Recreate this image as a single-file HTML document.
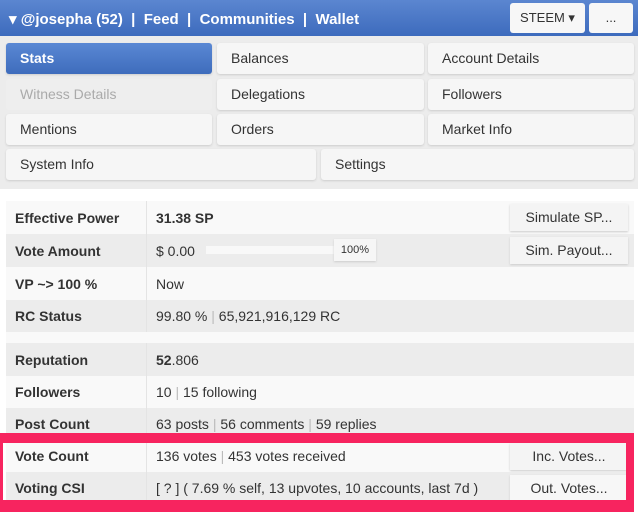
<!DOCTYPE html>
<html><head><style>
*{margin:0;padding:0;box-sizing:border-box}
body{width:638px;height:512px;overflow:hidden;background:#fff;font-family:"Liberation Sans",sans-serif;position:relative}
.hdr{position:absolute;left:0;top:0;width:638px;height:36px;background:linear-gradient(#5b86d0,#3d6bbd);color:#fff;font-weight:bold;font-size:15px}
.hdr .t{position:absolute;left:9px;top:10px;white-space:pre}
.hb{position:absolute;top:3px;height:30px;background:#f7f7f7;border-radius:3px;color:#333;font-size:13px;text-align:center;line-height:30px;font-weight:normal}
.grid{position:absolute;left:0;top:36px;width:638px;height:153px;background:#ececec}
.b{position:absolute;height:31px;background:#f6f6f6;border-radius:3px;box-shadow:0 1px 2px #ccc;font-size:14px;color:#333;line-height:31px;padding-left:14px}
.act{background:linear-gradient(#5a88d4,#3e6cbc);color:#fff;font-weight:bold}
.dis{background:#eee;color:#aaa;box-shadow:none}
.tbl{position:absolute;left:6px;top:201px;width:628px}
.r{position:absolute;left:0;width:628px;font-size:14px;color:#333}
.r .l{position:absolute;left:0;top:0;bottom:0;width:141px;font-weight:bold;padding-left:9px;display:flex;align-items:center;border-right:1px solid #e4e4e4}
.r .v{position:absolute;left:150px;top:0;bottom:0;display:flex;align-items:center;white-space:pre}
.w{background:#f9f9f9}.g{background:#ececec}
.sb{position:absolute;right:6px;width:118px;height:27px;background:#f4f4f4;box-shadow:0 1px 2px #ccc;font-size:14px;text-align:center;line-height:27px;color:#333}
.sep{color:#bbb}
.red{position:absolute;background:#f7245f}
</style></head><body>
<div class="hdr"><div class="t">▾ @josepha (52)  |  Feed  |  Communities  |  Wallet</div>
<div class="hb" style="left:510px;width:75px">STEEM ▾</div>
<div class="hb" style="left:589px;width:44px">...</div></div>
<div class="grid">
<div class="b act" style="left:6px;top:7px;width:206px">Stats</div>
<div class="b" style="left:217px;top:7px;width:207px">Balances</div>
<div class="b" style="left:428px;top:7px;width:206px">Account Details</div>
<div class="b dis" style="left:6px;top:43px;width:206px">Witness Details</div>
<div class="b" style="left:217px;top:43px;width:207px">Delegations</div>
<div class="b" style="left:428px;top:43px;width:206px">Followers</div>
<div class="b" style="left:6px;top:78px;width:206px">Mentions</div>
<div class="b" style="left:217px;top:78px;width:207px">Orders</div>
<div class="b" style="left:428px;top:78px;width:206px">Market Info</div>
<div class="b" style="left:6px;top:113px;width:310px">System Info</div>
<div class="b" style="left:321px;top:113px;width:313px">Settings</div>
</div>
<div class="tbl">
<div class="r w" style="top:0;height:33px"><div class="l">Effective Power</div><div class="v" style="font-weight:bold">31.38 SP</div><div class="sb" style="top:3px">Simulate SP...</div></div>
<div class="r g" style="top:33px;height:33px"><div class="l">Vote Amount</div><div class="v">$ 0.00</div>
<div style="position:absolute;left:200px;top:12px;width:130px;height:8px;background:#f8f8f8"></div>
<div style="position:absolute;left:328px;top:5px;width:42px;height:22px;background:#f6f6f6;box-shadow:0 1px 2px #ccc;font-size:11px;text-align:center;line-height:22px">100%</div>
<div class="sb" style="top:3px">Sim. Payout...</div></div>
<div class="r w" style="top:66px;height:33px"><div class="l">VP ~&gt; 100 %</div><div class="v">Now</div></div>
<div class="r g" style="top:99px;height:32px"><div class="l">RC Status</div><div class="v">99.80 % <span class="sep">|</span> 65,921,916,129 RC</div></div>
<div class="r w" style="top:131px;height:11px"></div>
<div class="r g" style="top:142px;height:33px"><div class="l">Reputation</div><div class="v"><b>52</b>.806</div></div>
<div class="r w" style="top:175px;height:32px"><div class="l">Followers</div><div class="v">10 <span class="sep">|</span> 15 following</div></div>
<div class="r g" style="top:207px;height:32px"><div class="l">Post Count</div><div class="v">63 posts <span class="sep">|</span> 56 comments <span class="sep">|</span> 59 replies</div></div>
<div class="r w" style="top:239px;height:32px"><div class="l">Vote Count</div><div class="v">136 votes <span class="sep">|</span> 453 votes received</div><div class="sb" style="top:3px">Inc. Votes...</div></div>
<div class="r g" style="top:271px;height:32px"><div class="l">Voting CSI</div><div class="v">[ ? ] ( 7.69 % self, 13 upvotes, 10 accounts, last 7d )</div><div class="sb" style="top:3px;background:#f7f7f7">Out. Votes...</div></div>
</div>
<div class="red" style="left:0;top:433px;width:634px;height:10px"></div>
<div class="red" style="left:0;top:500px;width:634px;height:12px"></div>
<div class="red" style="left:0;top:433px;width:3px;height:79px"></div>
<div class="red" style="left:626px;top:433px;width:8px;height:79px"></div>
</body></html>
